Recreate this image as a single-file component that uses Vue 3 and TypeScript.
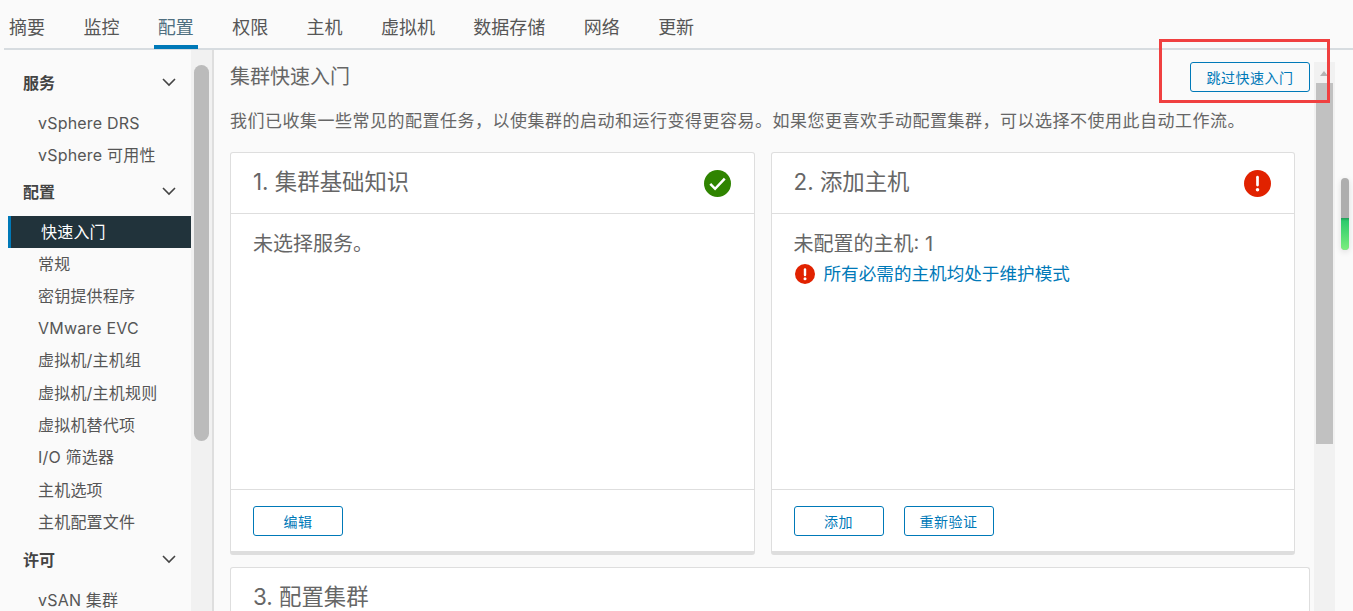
<script setup lang="ts">
const tabs = ['摘要', '监控', '配置', '权限', '主机', '虚拟机', '数据存储', '网络', '更新']
interface Group { title: string; items: string[] }
const groups: Group[] = [
  { title: '服务', items: ['vSphere DRS', 'vSphere 可用性'] },
  { title: '配置', items: ['快速入门', '常规', '密钥提供程序', 'VMware EVC', '虚拟机/主机组', '虚拟机/主机规则', '虚拟机替代项', 'I/O 筛选器', '主机选项', '主机配置文件'] },
  { title: '许可', items: ['vSAN 集群'] },
]
</script>

<template>
  <div class="page">
    <nav class="tabs">
      <a v-for="t in tabs" :key="t" class="tab" :class="{ active: t === '配置' }">{{ t }}</a>
    </nav>
    <div class="body">
      <aside class="side">
        <div class="side-list">
          <template v-for="g in groups" :key="g.title">
            <div class="group" :class="{ late: g.title === '许可' }">
              <span>{{ g.title }}</span>
              <svg width="16" height="16" viewBox="0 0 16 16"><path d="M2 5l6 6 6-6" fill="none" stroke="#444" stroke-width="1.6" /></svg>
            </div>
            <div v-for="i in g.items" :key="i" class="item" :class="{ current: i === '快速入门' }">{{ i }}</div>
          </template>
        </div>
        <div class="side-track"><div class="side-thumb"></div></div>
      </aside>
      <main class="main">
        <div class="content">
          <div class="head">
            <h2>集群快速入门</h2>
            <button class="btn skip">跳过快速入门</button>
          </div>
          <p class="intro">我们已收集一些常见的配置任务，以使集群的启动和运行变得更容易。如果您更喜欢手动配置集群，可以选择不使用此自动工作流。</p>
          <div class="cards">
            <section class="card">
              <header class="card-head">
                <span>1. 集群基础知识</span>
                <svg class="status" width="27" height="27" viewBox="0 0 28 28"><circle cx="14" cy="14" r="14" fill="#2f8400" /><path d="M6.5 14.5l5 5 10-10.5" fill="none" stroke="#fff" stroke-width="2.6" /></svg>
              </header>
              <div class="card-body"><div>未选择服务。</div></div>
              <footer class="card-foot"><button class="btn">编辑</button></footer>
            </section>
            <section class="card">
              <header class="card-head">
                <span>2. 添加主机</span>
                <svg class="status" width="27" height="27" viewBox="0 0 28 28"><circle cx="14" cy="14" r="14" fill="#e12200" /><rect x="12.6" y="6" width="2.8" height="11" rx="1.4" fill="#fff" /><circle cx="14" cy="20.5" r="1.8" fill="#fff" /></svg>
              </header>
              <div class="card-body">
                <div>未配置的主机: 1</div>
                <div class="err">
                  <svg width="20" height="20" viewBox="0 0 28 28"><circle cx="14" cy="14" r="14" fill="#e12200" /><rect x="12.3" y="6" width="3.4" height="11" rx="1.7" fill="#fff" /><circle cx="14" cy="20.8" r="2.1" fill="#fff" /></svg>
                  <a>所有必需的主机均处于维护模式</a>
                </div>
              </div>
              <footer class="card-foot">
                <button class="btn">添加</button>
                <button class="btn">重新验证</button>
              </footer>
            </section>
          </div>
          <section class="card wide">
            <header class="card-head"><span>3. 配置集群</span></header>
          </section>
        </div>
        <div class="main-track">
          <div class="arrow"></div>
          <div class="main-thumb"></div>
        </div>
        <div class="meter"><div class="meter-fill"></div></div>
        <div class="callout"></div>
      </main>
    </div>
  </div>
</template>

<style scoped>
.page {
  width: 1353px;
  height: 611px;
  overflow: hidden;
  background: #fafafa;
  font-family: Inter, "Noto Sans CJK SC", sans-serif;
  color: #565656;
  display: flex;
  flex-direction: column;
}
.tabs {
  margin-left: 4px;
  padding-left: 1px;
  padding-top: 4px;
  display: flex;
  gap: 30.4px;
  border-bottom: 2px solid #d7dce0;
  box-sizing: content-box;
  height: 44px;
  flex: none;
}
.tab {
  padding: 0 4px;
  height: 45px;
  line-height: 47px;
  font-size: 18px;
  color: #565656;
  box-sizing: border-box;
}
.tab.active {
  color: #4f6f80;
  border-bottom: 4px solid #0079b8;
}
.body {
  flex: 1;
  display: flex;
  min-height: 0;
}
.side {
  width: 214px;
  flex: none;
  box-sizing: border-box;
  display: flex;
  border-right: 2px solid #dedede;
  overflow: hidden;
}
.side-list {
  width: 191px;
  flex: none;
  padding: 16px 0 0 8px;
  box-sizing: border-box;
}
.group {
  display: flex;
  justify-content: space-between;
  align-items: center;
  height: 32px;
  padding: 0 14px 0 15px;
  font-size: 16px;
  font-weight: 700;
  color: #444;
}
.group + .item { margin-top: 9px; }
.item {
  height: 32.3px;
  line-height: 32px;
  padding-left: 30px;
  font-size: 16px;
  letter-spacing: 0.2px;
  color: #565656;
  white-space: nowrap;
}
.item + .group { margin-top: 3px; }
.item + .group.late { margin-top: 5px; }
.item.current {
  margin-top: 9px;
  background: #21333b;
  color: #fff;
  border-left: 3px solid #0079b8;
  padding-left: 30px;
  height: 32px;
}
.side-track {
  width: 21px;
  flex: none;
  background: #f1f1f1;
  padding: 15px 3px 0;
  box-sizing: border-box;
}
.side-thumb {
  height: 376px;
  background: #bbb;
  border-radius: 8px;
}
.main {
  flex: 1;
  position: relative;
  display: flex;
  min-width: 0;
}
.content {
  width: 1100px;
  flex: none;
  padding: 15px 0 0 16px;
  box-sizing: border-box;
}
.head {
  display: flex;
  justify-content: space-between;
  align-items: flex-start;
  height: 44px;
  padding-right: 4px;
}
h2 {
  margin: 0;
  font-size: 20px;
  font-weight: 400;
  line-height: 24px;
  color: #666;
}
.btn {
  height: 30px;
  min-width: 90px;
  padding: 0 14px;
  border: 1px solid #0079b8;
  border-radius: 3px;
  background: #fff;
  color: #0079b8;
  font: 14px Inter, "Noto Sans CJK SC", sans-serif;
  letter-spacing: 0.5px;
  box-sizing: border-box;
}
.skip { width: 120px; padding: 0; background: transparent; margin-top: -3px; }
.intro {
  margin: 0;
  font-size: 17px;
  letter-spacing: 0.5px;
  line-height: 24px;
  white-space: nowrap;
  color: #666;
}
.cards {
  margin-top: 19px;
  display: flex;
  gap: 16px;
}
.card {
  width: 524.5px;
  flex: none;
  height: 403px;
  box-sizing: border-box;
  display: flex;
  flex-direction: column;
  background: #fff;
  border: 1px solid #dedede;
  border-bottom: 4px solid #dedede;
  border-radius: 3px;
}
.card-head {
  height: 60px;
  flex: none;
  padding: 0 23px 0 22px;
  display: flex;
  justify-content: space-between;
  align-items: center;
  border-bottom: 1px solid #dedede;
  font-size: 22.4px;
  color: #666;
  box-sizing: content-box;
}
.card-head span { margin-bottom: 6px; }
.status { flex: none; }
.card-body {
  flex: 1;
  padding: 15px 22px;
  font-size: 20px;
  line-height: 30px;
  color: #666;
}
.err {
  display: flex;
  align-items: center;
  gap: 9px;
  font-size: 17.6px;
}
.err svg { flex: none; margin-left: 1px; }
.err a { color: #0079b8; }
.card-foot {
  height: 62px;
  flex: none;
  box-sizing: border-box;
  padding: 16px 22px 0;
  display: flex;
  gap: 20px;
  align-items: flex-start;
  border-top: 1px solid #dedede;
}
.wide {
  width: 1080px;
  margin-top: 12px;
  border-bottom: 0;
}
.main-track {
  position: absolute;
  left: 1100px;
  top: 12px;
  bottom: 0;
  width: 21px;
  background: #f1f1f1;
}
.arrow {
  position: absolute;
  left: 6px;
  top: 9px;
  width: 0;
  height: 0;
  border: 4px solid transparent;
  border-top: 0;
  border-bottom: 5px solid #b4b4b4;
}
.main-thumb {
  position: absolute;
  top: 21px;
  left: 2px;
  width: 17px;
  height: 361px;
  background: #c1c1c1;
}
.meter {
  position: absolute;
  left: 1127px;
  top: 128px;
  width: 8px;
  height: 72px;
  border-radius: 4px;
  background: #aeaeae;
  box-shadow: 0 2px 6px rgba(0, 0, 0, 0.12);
  overflow: hidden;
}
.meter-fill {
  position: absolute;
  left: 0;
  right: 0;
  bottom: 0;
  height: 32px;
  background: linear-gradient(#1f9c58 0, #2ccb6c 3px, #7cee7e 100%);
}
.callout {
  position: absolute;
  left: 945px;
  top: -11px;
  width: 171px;
  height: 64px;
  box-sizing: border-box;
  border: 3px solid #f04040;
}
</style>

<style>
body { margin: 0; }
</style>
